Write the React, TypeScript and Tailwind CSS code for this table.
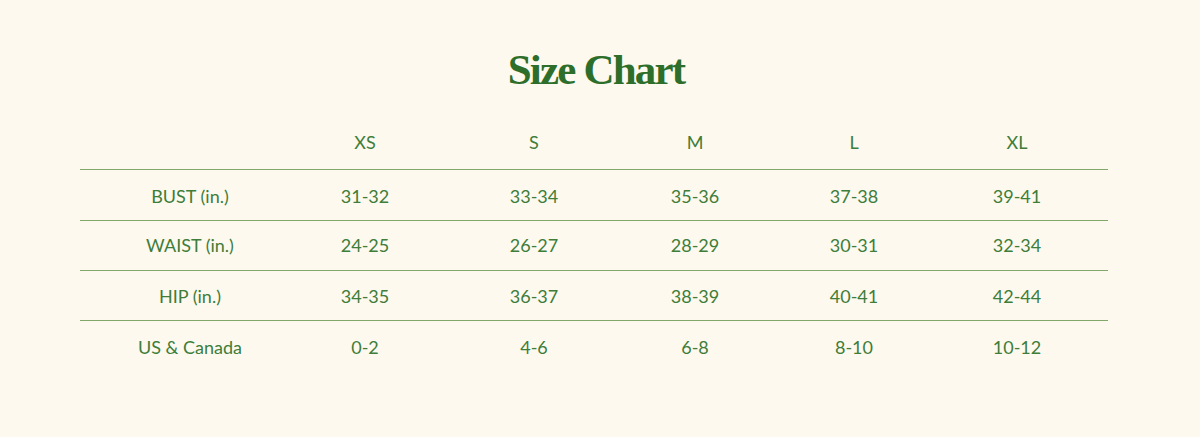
import React from "react";

const sizes = ["XS", "S", "M", "L", "XL"];
const rows: { label: string; values: string[]; h: string }[] = [
  { label: "BUST (in.)", values: ["31-32", "33-34", "35-36", "37-38", "39-41"], h: "h-[51px] pt-[3px]" },
  { label: "WAIST (in.)", values: ["24-25", "26-27", "28-29", "30-31", "32-34"], h: "h-[50px]" },
  { label: "HIP (in.)", values: ["34-35", "36-37", "38-39", "40-41", "42-44"], h: "h-[50px] pt-[2px]" },
  { label: "US & Canada", values: ["0-2", "4-6", "6-8", "8-10", "10-12"], h: "h-[50px] pt-[3px]" },
];

const cols = "grid grid-cols-[220px_130px_208px_114px_204px_122px]";

export default function App() {
  return (
    <div
      className="w-[1200px] h-[437px] bg-[#fdf9ee] flex flex-col pt-[44px] text-[#3e7d3a]"
      style={{ fontFamily: "Lato, 'Noto Sans', sans-serif" }}
    >
      <h1
        className="self-center ml-[-8px] text-[43px] leading-[52px] font-bold text-[#2d6e2b] tracking-[-1.8px]"
        style={{ fontFamily: "'Liberation Serif', serif" }}
      >
        Size Chart
      </h1>
      <div className="ml-[80px] w-[1028px] mt-[32px] text-[18px]">
        <div className={`${cols} h-[42px] items-center pb-[12px] border-b border-[#80a868]`}>
          <div />
          {sizes.map((s) => (
            <div key={s} className="text-center">{s}</div>
          ))}
        </div>
        {rows.map((r, i) => (
          <div
            key={r.label}
            className={`${cols} ${r.h} items-center ${i < rows.length - 1 ? "border-b border-[#80a868]" : ""}`}
          >
            <div className="text-center">{r.label}</div>
            {r.values.map((v, j) => (
              <div key={j} className="text-center">{v}</div>
            ))}
          </div>
        ))}
      </div>
    </div>
  );
}
